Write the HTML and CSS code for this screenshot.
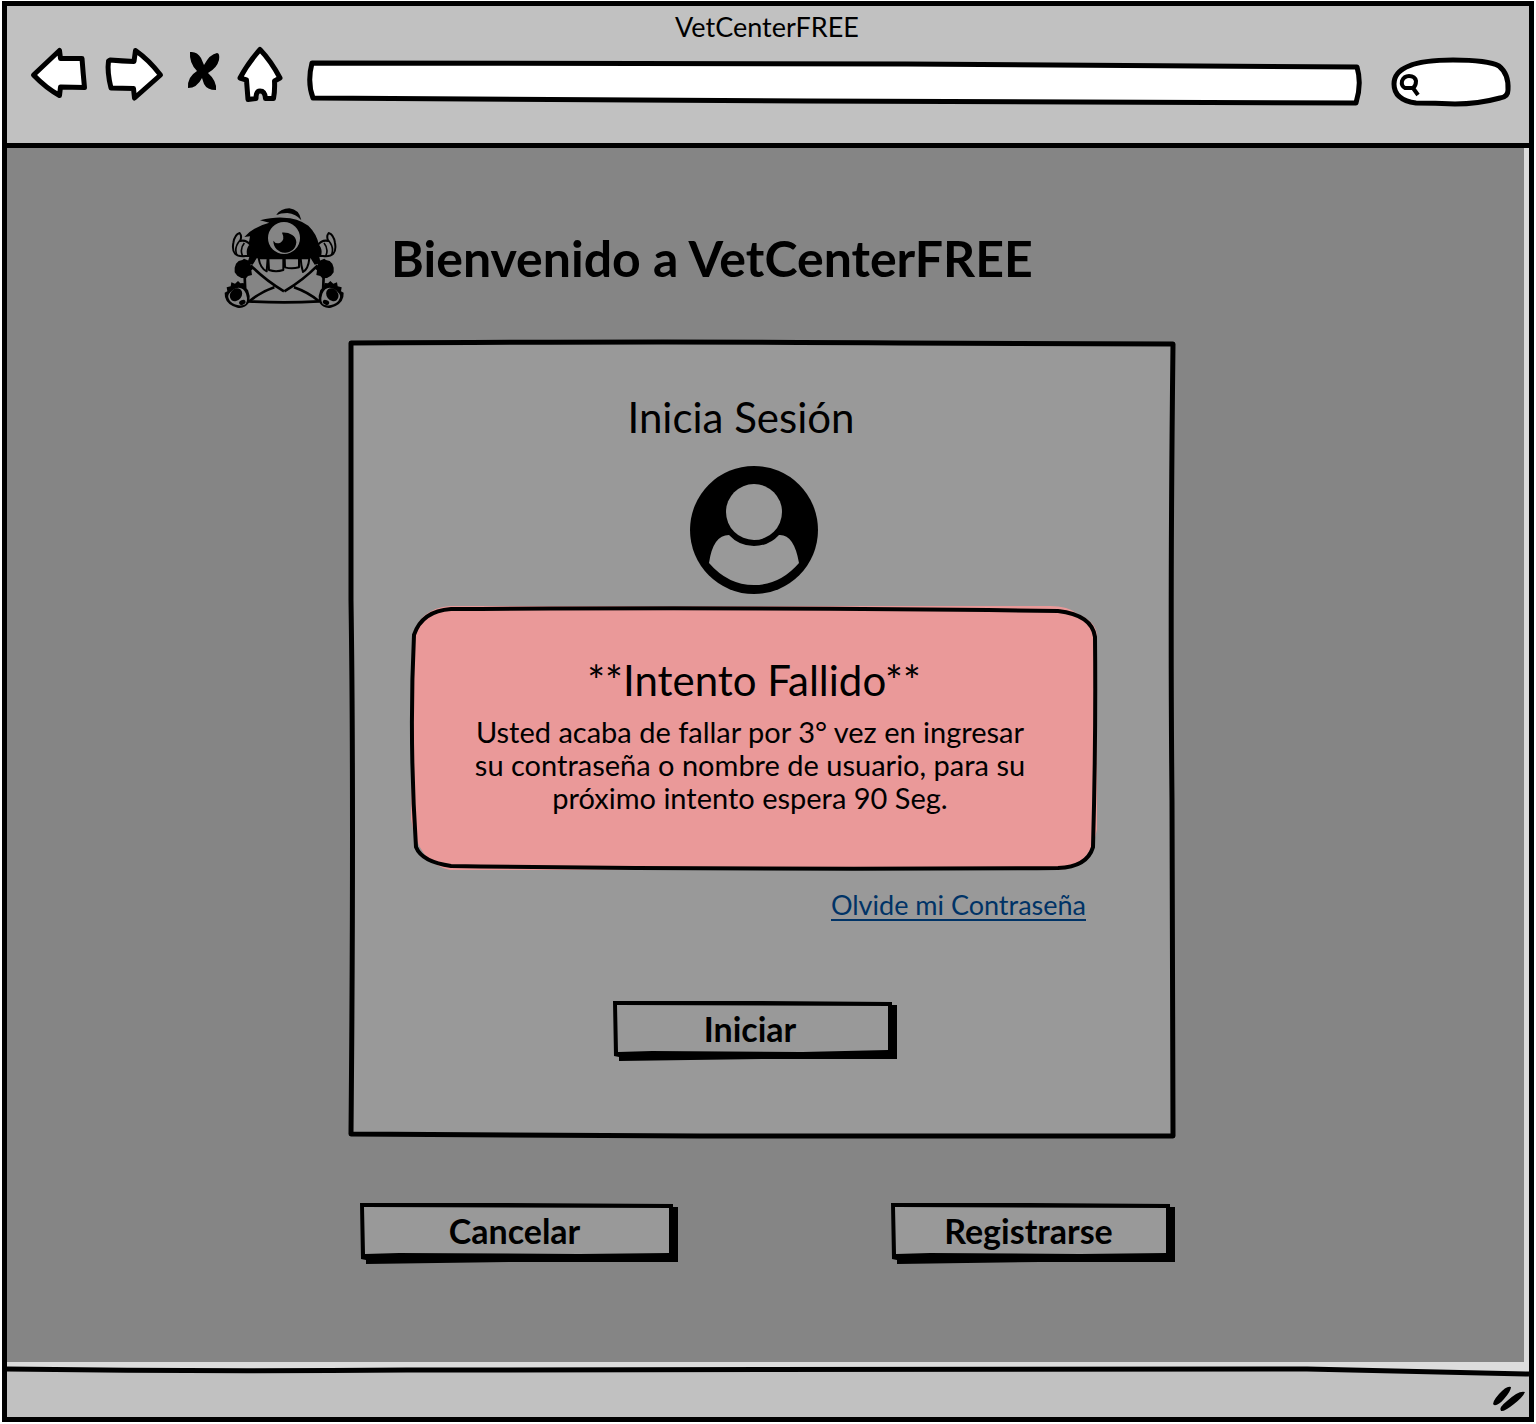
FILE: index.html
```html
<!DOCTYPE html>
<html lang="es">
<head>
<meta charset="utf-8">
<meta name="viewport" content="width=device-width, initial-scale=1">
<title>VetCenterFREE</title>
<link rel="stylesheet" href="styles.css">
</head>
<body>
<div class="window">
  <header class="chrome">
    <p class="chrome-title">VetCenterFREE</p>
    <div class="toolbar">
      <nav class="nav" aria-label="Navegador">
        <button class="nav-button" type="button" aria-label="Atrás">
          <svg class="icon" width="58" height="56" viewBox="31 45 58 56"><path d="M33.500 75L59.500 50.500L60.500 58.500L82 58.500Q83 72 84.500 87.500L60.500 87L59.500 95.500Q46 88 33.500 75Z"/></svg>
        </button>
        <button class="nav-button" type="button" aria-label="Adelante">
          <svg class="icon" width="58" height="56" viewBox="105 45 58 56"><path d="M110 60Q122 61 134 61.500L135.500 50.500Q149 60 160.500 75L134.500 98L133.500 88.500L111 88Q107 72 108.500 61Z"/></svg>
        </button>
        <button class="nav-button" type="button" aria-label="Detener">
          <svg class="icon-solid" width="42" height="56" viewBox="179 45 42 56"><path d="M190 52Q197 51 201 58L204 65Q210 54 217 53Q220 53 219 60Q217 68 208 73Q217 81 216 90Q207 90 204 84L202 78Q197 88 188 88Q187 77 197 71Q189 63 190 52Z"/></svg>
        </button>
        <button class="nav-button" type="button" aria-label="Inicio">
          <svg class="icon" width="46" height="56" viewBox="237 44 46 56"><path d="M260 48.500Q271 60 280 77L274.500 80Q275 90 273.500 97.500L265.500 97.500Q265 90 260 90Q256 90 256 97.500L248 98.500L246.500 79L240 77Q248 62 260 48.500Z"/></svg>
        </button>
      </nav>
      <div class="field field-url">
        <svg class="sketch" viewBox="0 0 1054 46" preserveAspectRatio="none" aria-hidden="true"><path class="paper line" d="M5 3L600 4L1050 7Q1055 24 1049 43L500 41L6 38Q0 22 5 3Z"/></svg>
        <input class="field-input" type="text" aria-label="Dirección">
      </div>
      <div class="field field-search">
        <svg class="sketch" viewBox="1391 56 120 50" preserveAspectRatio="none" aria-hidden="true"><path class="paper line" d="M1416 103Q1394 100 1394 84C1394 66 1420 60 1453 60Q1488 60 1499 66Q1509 74 1508 90Q1508 97 1500 98Q1478 104 1455 104Q1435 103 1416 103Z"/><path class="line fine" d="M1412 88L1405 88Q1401 86 1402 81Q1404 76 1409 76Q1415 76 1416 81Q1416 86 1413 88L1418 95"/></svg>
        <input class="field-input" type="search" aria-label="Buscar">
      </div>
    </div>
  </header>

  <main class="page">
    <div class="brand">
      <svg class="logo" width="120" height="100" viewBox="42 39 360 300" role="img" aria-label="VetCenterFREE">
        <path d="M198 60Q213 40 238 40Q268 43 274 76Q258 56 232 54Q212 54 198 60Z"/>
        <path d="M103 126Q130 95 178 83L150 76Q190 66 220 68Q262 68 295 92Q322 118 327 152L338 178L328 186L332 204L314 209L302 190L140 190L128 209L112 204L118 186L104 182L114 158L120 124Z"/>
        <circle class="cut" cx="222" cy="129" r="48"/>
        <path d="M216 113C235 111 259 121 259 142C258 163 240 174 224 173C205 172 190 157 190 137Q198 149 211 143Q226 133 216 113Z"/>
        <g class="outline">
          <path d="M146 190L173 190L170 229Q151 220 146 190Z"/>
          <path d="M175 190L220 190L220 225Q198 232 177 225Z"/>
          <path d="M224 190L267 190L267 217Q245 223 225 217Z"/>
          <path d="M272 190L298 190Q295 222 279 231Q273 212 272 190Z"/>
        </g>
        <g id="side">
          <path class="outline" d="M106 183Q62 188 70 144Q74 118 89 114Q97 124 90 138Q108 133 122 150Q109 162 115 183Z"/>
          <path class="stroke" d="M89 137Q72 157 80 179M103 144Q88 162 98 184"/>
          <path d="M74 218L78 206L86 198L97 195L102 191L113 196L122 202L122 212L134 218L124 226L126 240L114 243L108 250L94 249L82 242L74 232Z"/>
          <path class="stroke wide" d="M104 244L106 292M122 211Q165 255 222 289M118 319Q150 292 193 277"/>
          <path d="M62 274L64 262L75 266L84 258L91 265L101 264L104 276L114 285L119 303L118 322Q104 342 82 338Q51 330 45 306L44 293L52 289L50 277Z"/>
          <path class="cut" d="M86 278Q101 278 108 296Q117 324 101 330Q77 335 60 318Q48 302 62 291Q72 279 86 278Z"/>
          <ellipse cx="78" cy="299" rx="17" ry="21" transform="rotate(38 78 299)"/>
          <ellipse cx="97" cy="322" rx="10" ry="7" transform="rotate(-25 97 322)"/>
        </g>
        <use href="#side" transform="matrix(-1 0 0 1 445 0)"/>
        <path class="stroke wide" d="M116 319Q222 325 328 319"/>
      </svg>
      <h1 class="brand-title">Bienvenido a VetCenterFREE</h1>
    </div>

    <form class="card" id="login">
      <svg class="sketch" viewBox="348 341 827 796" preserveAspectRatio="none" aria-hidden="true"><path class="surface line" d="M351 343Q700 341 900 343L1173 344Q1170 600 1172 800L1173 1135Q900 1136 700 1135L351 1133Q354 800 351 600Z"/></svg>
      <h2 class="card-title">Inicia Sesión</h2>
      <svg class="avatar" width="128" height="128" viewBox="0 0 128 128" role="img" aria-label="Usuario">
        <circle cx="64" cy="64" r="64"/>
        <circle class="hole" cx="64" cy="46" r="28"/>
        <path class="hole" d="M39 69Q49 80 64 80Q79 80 89 69Q104 68 109 97Q90 119 64 119Q38 119 19 97Q23 69 39 69Z"/>
      </svg>
      <section class="alert" role="alert">
        <svg class="sketch" viewBox="411 605 686 267" preserveAspectRatio="none" aria-hidden="true">
          <path class="danger" d="M450 606L1050 606Q1068 606 1078 614Q1097 622 1097 637L1097 830Q1090 868 1058 871L450 871Q418 864 411 820L412 637Q420 608 450 606Z"/>
          <path class="line fine" d="M451 609Q800 607 1058 611Q1092 615 1095 637Q1096 740 1093 848Q1087 868 1058 869Q750 871 451 867Q422 863 416 848Q409 740 414 635Q422 611 451 609Z"/>
        </svg>
        <h3 class="alert-title">**Intento Fallido**</h3>
        <p class="alert-text">Usted acaba de fallar por 3° vez en ingresar<br>su contraseña o nombre de usuario, para su<br>próximo intento espera 90 Seg.</p>
      </section>
      <a class="link" href="#login">Olvide mi Contraseña</a>
      <button class="button" type="button">
        <svg class="sketch" viewBox="0 0 285 61" preserveAspectRatio="none" aria-hidden="true"><path d="M1 0L140 0L280 1L280 4L285 4L285 58L150 58L7 60L7 56L2 55Z"/><path class="surface" d="M5 4L276 5L276 49L190 51L40 50L6 51Z"/></svg>
        <span class="button-label">Iniciar</span>
      </button>
    </form>

    <div class="actions">
      <button class="button button-wide" type="button">
        <svg class="sketch" viewBox="0 0 319 61" preserveAspectRatio="none" aria-hidden="true"><path d="M1 0L140 0L314 1L314 4L319 4L319 59L150 59L7 61L7 57L2 56Z"/><path class="surface" d="M5 4L310 5L310 50L220 51L40 50L6 51Z"/></svg>
        <span class="button-label">Cancelar</span>
      </button>
      <button class="button" type="button">
        <svg class="sketch" viewBox="0 0 285 61" preserveAspectRatio="none" aria-hidden="true"><path d="M1 0L140 0L280 1L280 4L285 4L285 59L150 59L7 61L7 57L2 56Z"/><path class="surface" d="M5 4L276 5L276 50L190 51L40 50L6 51Z"/></svg>
        <span class="button-label">Registrarse</span>
      </button>
    </div>
  </main>

  <footer class="status">
    <svg class="status-line" viewBox="0 0 1522 10" preserveAspectRatio="none" aria-hidden="true"><path class="strip" d="M0 0H1522V7L1300 2L0 2Z"/><path class="line" d="M0 2Q200 5 400 3L1300 2L1522 7"/></svg>
    <svg class="grip" width="32" height="26" viewBox="1492 1385 32 26" aria-hidden="true"><path d="M1494 1405Q1491 1403 1499 1394Q1507 1385 1511 1387Q1511 1391 1504 1399Q1498 1406 1494 1405ZM1501 1411Q1498 1408 1507 1401Q1519 1390 1525 1392Q1523 1397 1514 1404Q1504 1412 1501 1411Z"/></svg>
  </footer>
</div>
</body>
</html>
```
FILE: styles.css
```css
* { box-sizing: border-box; }

body {
  display: flex;
  flex-direction: column;
  min-height: 100vh;
  margin: 0;
  background: #fff;
  color: #000;
  font-family: Lato, "Open Sans", sans-serif;
}

h1, h2, h3, p { margin: 0; font-weight: 400; }

button {
  border: 0;
  padding: 0;
  background: none;
  color: inherit;
  font: inherit;
  cursor: pointer;
}

svg { display: block; overflow: visible; }

/* Hand-drawn outlines stretched behind their box */
.sketch {
  position: absolute;
  inset: 0;
  width: 100%;
  height: 100%;
}
.line {
  fill: none;
  stroke: #000;
  stroke-width: 5px;
  stroke-linejoin: round;
  vector-effect: non-scaling-stroke;
}
.fine { stroke-width: 4px; }
.paper { fill: #fff; }
.surface { fill: #999; }
.danger { fill: #ea9999; }
.strip { fill: #dcdcdc; }

.window {
  display: flex;
  flex: 1;
  flex-direction: column;
  margin: 1px 2px 2px;
  border: 5px solid #000;
  background: #c1c1c1;
}

/* Browser chrome */
.chrome {
  padding: 5px 18px 37px 24px;
  border-bottom: 5px solid #000;
}
.chrome-title {
  margin-bottom: 2px;
  padding-right: 8px;
  font-size: 27px;
  line-height: 32px;
  text-align: center;
}
.toolbar {
  display: flex;
  align-items: flex-end;
  gap: 24px;
  height: 61px;
}
.nav {
  display: flex;
  align-self: flex-start;
  gap: 16px;
}
.icon {
  fill: #fff;
  stroke: #000;
  stroke-width: 5px;
  stroke-linejoin: round;
}
.field { position: relative; }
.field-url { flex: 1; height: 46px; }
.field-search { width: 120px; height: 50px; margin-left: 6px; }
.field-input {
  position: relative;
  width: 100%;
  height: 100%;
  padding: 0 16px;
  border: 0;
  background: none;
  font: inherit;
  font-size: 27px;
}
.field-search .field-input { padding-left: 32px; }

/* Page */
.page {
  display: grid;
  flex: 1;
  grid-template-columns: 217fr 124fr 827fr 349fr;
  align-content: start;
  padding: 60px 0 98px;
  border: solid #dcdcdc;
  border-width: 0 5px 0 0;
  background: #858585;
}
.brand {
  display: flex;
  grid-column: 2 / -1;
  align-items: center;
  gap: 47px;
  margin-bottom: 33px;
}
.logo { flex: none; }
.cut { fill: #858585; }
.outline { fill: #858585; stroke: #000; stroke-width: 6px; stroke-linejoin: round; }
.stroke { fill: none; stroke: #000; stroke-width: 5px; }
.wide { stroke-width: 8px; }
.brand-title {
  font-size: 50px;
  font-weight: 700;
  line-height: 56px;
}

.card {
  position: relative;
  display: flex;
  grid-column: 3;
  flex-direction: column;
  align-items: center;
  padding: 52px 78px 76px 63px;
}
.card-title {
  position: relative;
  margin: 0 26px 25px 0;
  font-size: 42px;
  line-height: 48px;
}
.avatar { position: relative; margin-bottom: 11px; }
.hole { fill: #999; }
.alert {
  position: relative;
  align-self: stretch;
  padding: 51px 24px 57px;
  text-align: center;
}
.alert-title {
  position: relative;
  margin-bottom: 11px;
  font-size: 42px;
  line-height: 48px;
}
.alert-text {
  position: relative;
  padding-right: 8px;
  font-size: 29px;
  line-height: 33px;
}
.link {
  position: relative;
  align-self: flex-end;
  margin: 20px 11px 80px 0;
  border-bottom: 2px solid #003366;
  color: #003366;
  font-size: 27px;
  line-height: 28px;
  text-decoration: none;
}
.button {
  position: relative;
  width: 285px;
  height: 61px;
  padding: 0 8px 6px 0;
  font-size: 34px;
  font-weight: 700;
  line-height: 40px;
}
.button-wide { width: 319px; }
.button-label { position: relative; }
.actions {
  display: flex;
  grid-column: 3;
  flex-wrap: wrap;
  justify-content: space-between;
  gap: 24px;
  margin-top: 65px;
  padding-left: 11px;
}

/* Status bar */
.status {
  display: flex;
  flex-direction: column;
  gap: 8px;
  padding-bottom: 6px;
  border-top: 5px solid #dcdcdc;
}
.status-line { width: 100%; height: 10px; }
.grip { align-self: flex-end; margin-right: 5px; }
```
